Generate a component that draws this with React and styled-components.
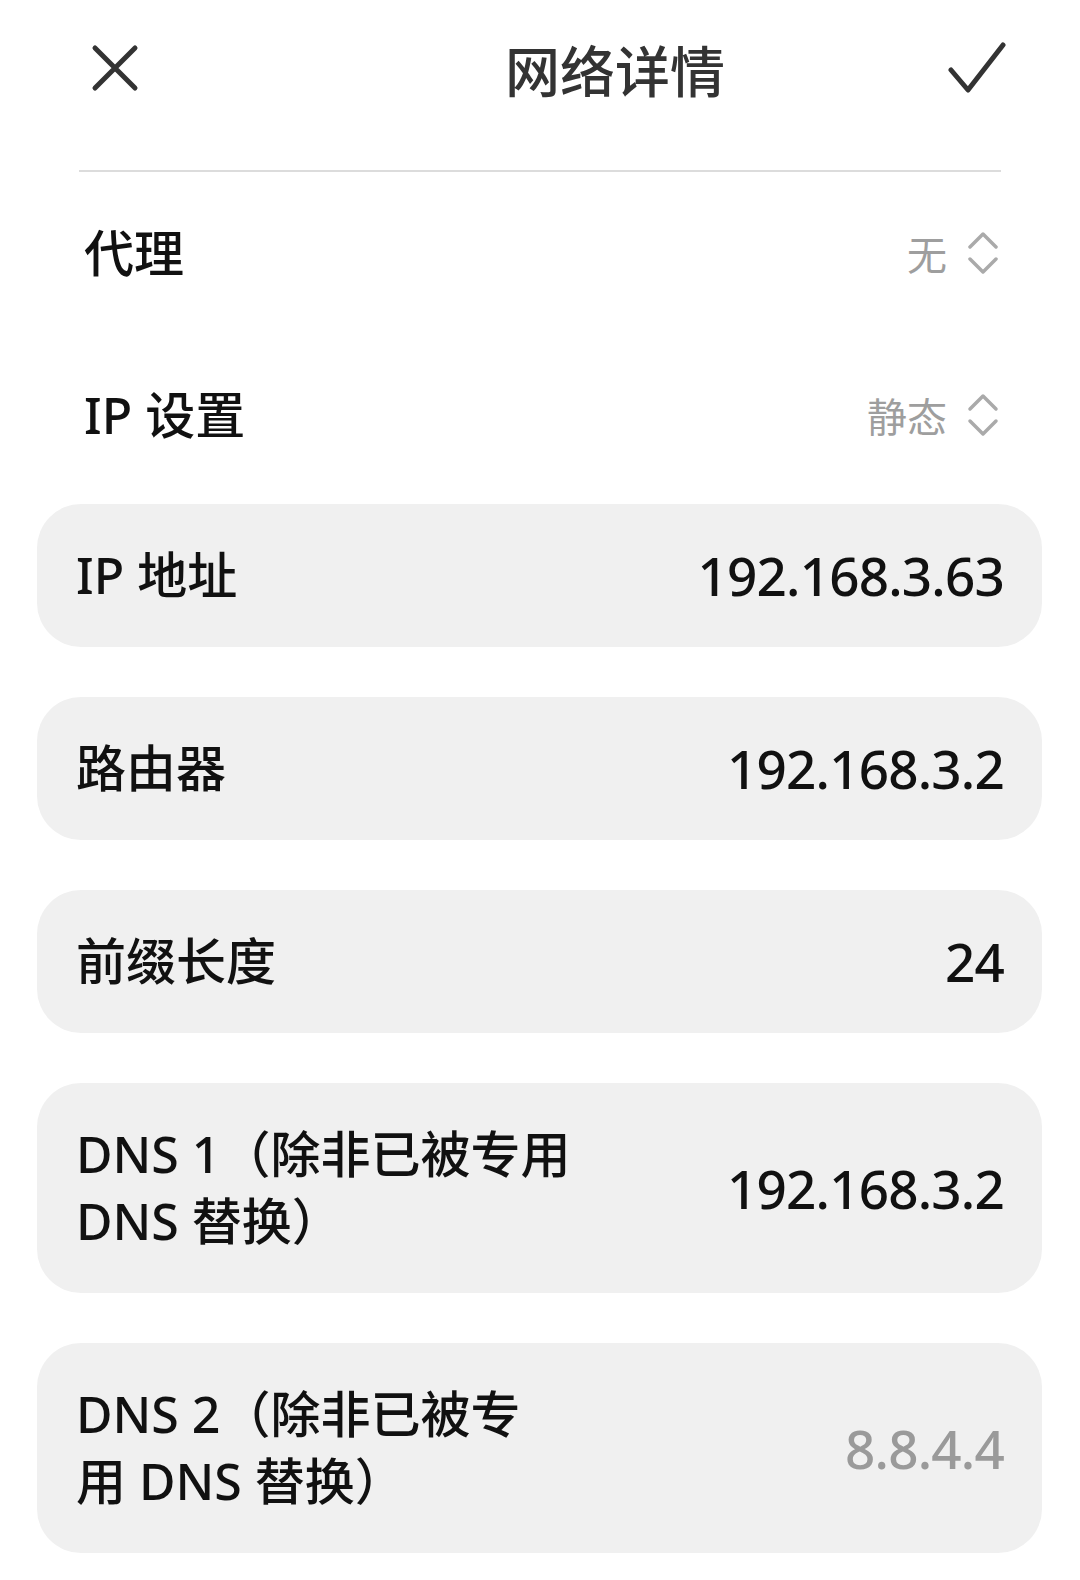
import React from "react";
import styled, { createGlobalStyle } from "styled-components";

const GlobalStyle = createGlobalStyle`
  body {
    margin: 0;
    background: #ffffff;
    font-family: "Noto Sans", "Noto Sans CJK SC", sans-serif;
  }
`;

const Page = styled.div`
  width: 1080px;
  min-height: 1580px;
  background: #ffffff;
  display: flex;
  flex-direction: column;
`;

const Header = styled.div`
  height: 135px;
  display: flex;
  align-items: center;
  justify-content: space-between;
  padding: 0 74px 0 86px;
`;

const IconButton = styled.button`
  width: 58px;
  height: 54px;
  padding: 0;
  border: none;
  background: none;
  display: flex;
  align-items: center;
  justify-content: center;
  color: #333333;
`;

const Title = styled.h1`
  margin: 0 0 0 138px;
  font-size: 55px;
  font-weight: 500;
  color: #333333;
  font-family: "Noto Sans CJK SC", sans-serif;
`;

const Divider = styled.div`
  height: 2px;
  background: #dcdcdc;
  margin: 35px 79px 0 79px;
`;

const SettingRow = styled.div`
  height: 162px;
  display: flex;
  align-items: center;
  justify-content: space-between;
  padding: 0 81px 0 84px;
`;

const Label = styled.span`
  font-size: 50px;
  font-weight: 500;
  color: #111111;
  font-family: "Noto Sans", "Noto Sans CJK SC", sans-serif;
  line-height: 67px;
`;

const Picker = styled.div`
  display: flex;
  align-items: center;
  gap: 20px;
  color: #9e9e9e;
  font-size: 40px;
  font-family: "Noto Sans CJK SC", sans-serif;
`;

const Cards = styled.div`
  display: flex;
  flex-direction: column;
  gap: 50px;
  padding: 8px 38px 0 37px;
`;

const Card = styled.div`
  min-height: ${(p) => (p.$tall ? 210 : 143)}px;
  box-sizing: border-box;
  background: #f0f0f0;
  border-radius: 44px;
  display: flex;
  align-items: center;
  justify-content: space-between;
  padding: 0 38px 0 39px;
`;

const CardLabel = styled(Label)`
  max-width: ${(p) => p.$wrap || 1000}px;
`;

const Value = styled.span`
  font-size: 53px;
  font-weight: 500;
  color: ${(p) => (p.$muted ? "#9a9a9a" : "#111111")};
  font-family: "Noto Sans", sans-serif;
  letter-spacing: -0.8px;
  white-space: nowrap;
`;

const Close = () => (
  <svg width="48" height="48" viewBox="0 0 48 48" fill="none">
    <path d="M4 4 L44 44 M44 4 L4 44" stroke="#333" strokeWidth="5" strokeLinecap="round" />
  </svg>
);

const Check = () => (
  <svg width="58" height="52" viewBox="0 0 58 52" fill="none">
    <path d="M3 28 L20 48 L55 3" stroke="#333" strokeWidth="5" strokeLinecap="round" strokeLinejoin="round" />
  </svg>
);

const UpDown = () => (
  <svg width="32" height="46" viewBox="0 0 32 46" fill="none">
    <path d="M3 17 L16 4 L29 17 M3 29 L16 42 L29 29" stroke="#aaaaaa" strokeWidth="3.5" strokeLinecap="round" strokeLinejoin="round" />
  </svg>
);

const items = [
  { label: "IP 地址", value: "192.168.3.63" },
  { label: "路由器", value: "192.168.3.2" },
  { label: "前缀长度", value: "24" },
  { label: "DNS 1（除非已被专用 DNS 替换）", value: "192.168.3.2", tall: true, wrap: 520 },
  { label: "DNS 2（除非已被专用 DNS 替换）", value: "8.8.4.4", tall: true, wrap: 472, muted: true },
];

export default function App() {
  return (
    <Page>
      <GlobalStyle />
      <Header>
        <IconButton>
          <Close />
        </IconButton>
        <Title>网络详情</Title>
        <IconButton>
          <Check />
        </IconButton>
      </Header>
      <Divider />
      <SettingRow>
        <Label>代理</Label>
        <Picker>
          无
          <UpDown />
        </Picker>
      </SettingRow>
      <SettingRow>
        <Label>IP 设置</Label>
        <Picker>
          静态
          <UpDown />
        </Picker>
      </SettingRow>
      <Cards>
        {items.map((it) => (
          <Card key={it.label} $tall={it.tall}>
            <CardLabel $wrap={it.wrap}>{it.label}</CardLabel>
            <Value $muted={it.muted}>{it.value}</Value>
          </Card>
        ))}
      </Cards>
    </Page>
  );
}
